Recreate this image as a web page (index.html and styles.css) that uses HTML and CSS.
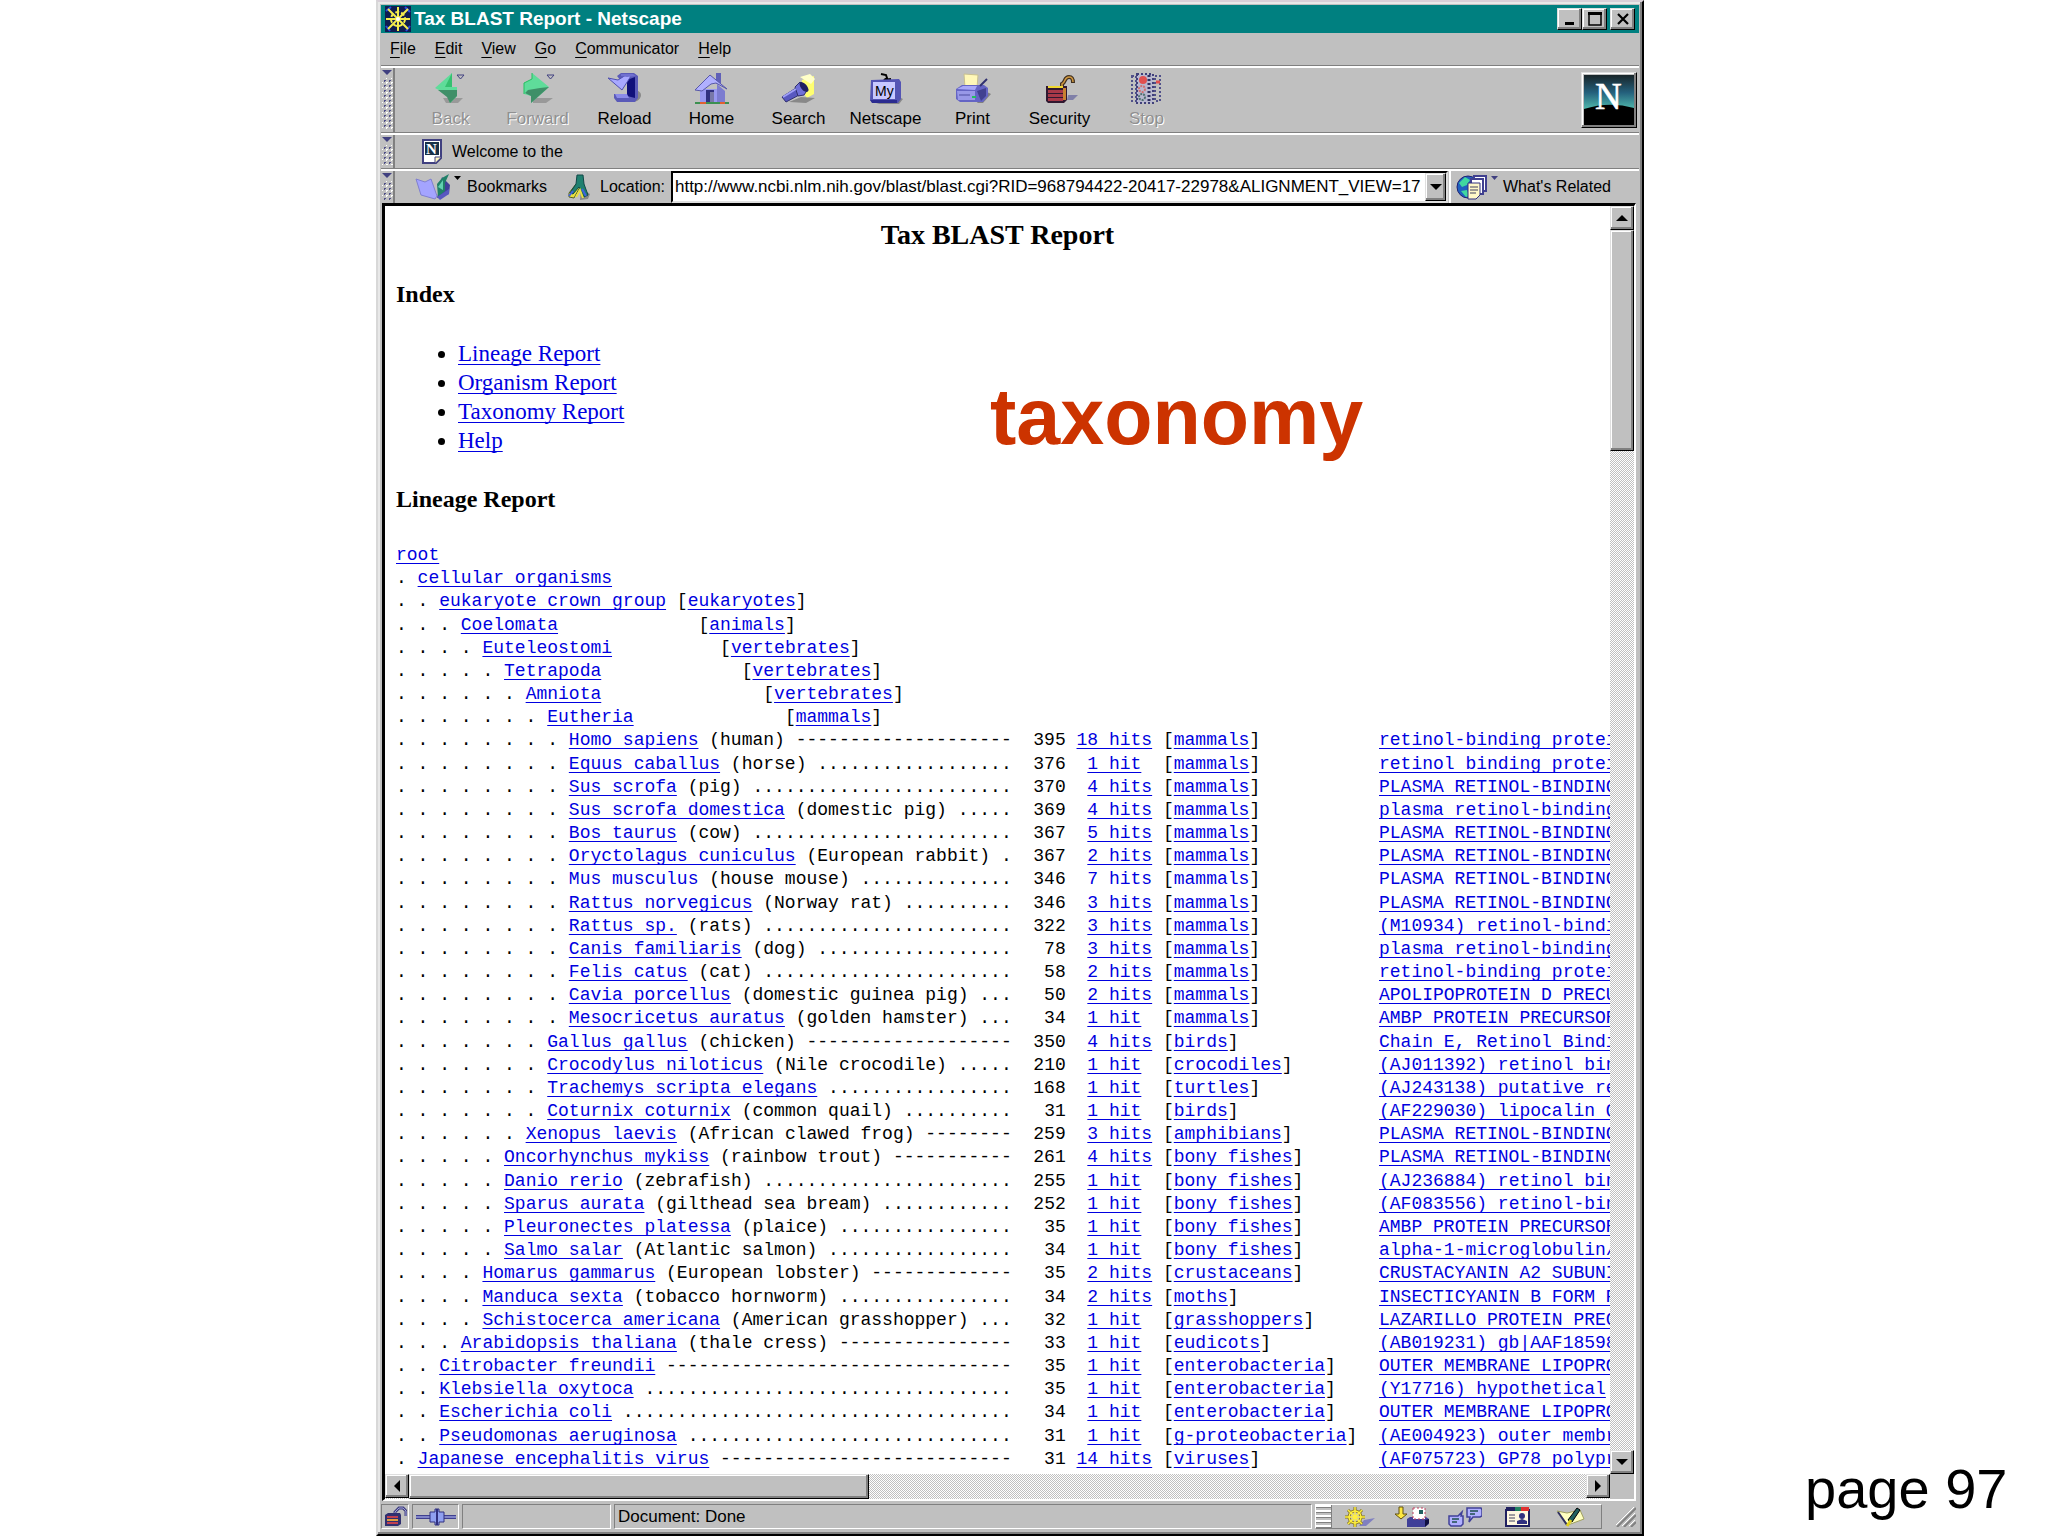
FILE: index.html
```html
<!DOCTYPE html>
<html lang="en">
<head>
  <meta charset="UTF-8">
  <title>Tax BLAST Report - Netscape</title>
  <link rel="stylesheet" href="styles.css">
</head>
<body>
  <div class="window">
    <header class="titlebar">
      <svg class="title-icon" width="26" height="26" viewBox="0 0 26 26">
        <rect width="26" height="26" fill="#101c50"/>
        <path d="M1 5l5-4M20 1l5 5M1 20l4 5M21 25l4-5" stroke="#2848e0" stroke-width="2"/>
        <path d="M13 1v24M1 13h24M3 3l20 20M23 3L3 23" stroke="#f4ec4c" stroke-width="2"/>
        <circle cx="13" cy="13" r="7" fill="none" stroke="#f4ec4c" stroke-width="2" stroke-dasharray="4 2"/>
        <circle cx="13" cy="13" r="2" fill="#fff"/>
      </svg>
      <h1>Tax BLAST Report - Netscape</h1>
      <div class="window-buttons">
        <button class="bevel" aria-label="Minimize"><svg width="16" height="14" viewBox="0 0 16 14"><path d="M3 11.500h9" stroke="#000" stroke-width="3"/></svg></button>
        <button class="bevel" aria-label="Maximize"><svg width="16" height="14" viewBox="0 0 16 14"><path d="M2 1h12v12H2z" fill="none" stroke="#000" stroke-width="1.500"/><path d="M1 1.500h14" stroke="#000" stroke-width="3"/></svg></button>
        <button class="bevel close" aria-label="Close"><svg width="16" height="14" viewBox="0 0 16 14"><path d="M3 2l10 10M13 2L3 12" stroke="#000" stroke-width="2.200"/></svg></button>
      </div>
    </header>

    <nav class="menu">
      <a href="#"><u>F</u>ile</a>
      <a href="#"><u>E</u>dit</a>
      <a href="#"><u>V</u>iew</a>
      <a href="#"><u>G</u>o</a>
      <a href="#"><u>C</u>ommunicator</a>
      <a href="#"><u>H</u>elp</a>
    </nav>

    <div class="bar toolbar">
      <div class="grip"></div>
      <div class="tools">
        <button class="tool" disabled>
          <svg width="38" height="34" viewBox="0 0 38 34">
            <path d="M11 26h20l-5 5H14z" fill="#999"/>
            <path d="M20 1v14h5v9l-7 7-2-8L3 16z" fill="#5fdc9a"/>
            <path d="M6 18h19v6l-7 7-3-6z" fill="#3f8f68"/>
            <path d="M20 1v14h-7z" fill="#35c070"/>
            <path d="M25 3h7l-3.500 4z" fill="#c0c0c0" stroke="#404080"/>
          </svg>
          Back
        </button>
        <button class="tool" disabled>
          <svg width="38" height="34" viewBox="0 0 38 34">
            <path d="M14 26h20l-7 5H14z" fill="#999"/>
            <path d="M13 1v6l-8 4v11l7 2v7l18-16z" fill="#5fdc9a"/>
            <path d="M30 15L12 31v-7l-6-3 3-3 12-2z" fill="#3f8f68"/>
            <path d="M13 1v6l-8 4v11" fill="none" stroke="#25c060"/>
            <path d="M28 3h7l-3.500 4z" fill="#c0c0c0" stroke="#404080"/>
          </svg>
          Forward
        </button>
        <button class="tool">
          <svg width="38" height="34" viewBox="0 0 38 34">
            <path d="M30 18c7 2 6 8 1 11l-4 1z" fill="#888"/>
            <path d="M11 4l4-3h13l4 3v22l-3 4H11l-3-4v-4h13V9h-6z" fill="#5a5ab8"/>
            <path d="M21 8l8-3v21l-8-2z" fill="#10107a"/>
            <path d="M2 6l10 2 8-5 5 1-9 14z" fill="#a8a8ff" stroke="#5050b0"/>
            <path d="M9 22h12l2 4H11z" fill="#8c8ce8"/>
            <path d="M15 2h12l3 2-9 1-6-1z" fill="#7070d0"/>
          </svg>
          Reload
        </button>
        <button class="tool">
          <svg width="38" height="34" viewBox="0 0 38 34">
            <path d="M2 31h34" stroke="#3c9050" stroke-width="2"/><path d="M7 31h6M27 31h5" stroke="#e06030" stroke-width="2"/>
            <path d="M23 1h5v11h-5z" fill="#6060b8"/>
            <path d="M7 17h23v13H7z" fill="#9898f0"/><path d="M24 12l8 7v11h-8z" fill="#7c7cd0"/>
            <path d="M2 18L17 3l17 14-11-6-5 1-9 7z" fill="#b0b0ff" stroke="#5858a8"/>
            <path d="M13 18h8v12h-8z" fill="#303080"/><path d="M17 20h4v10h-4z" fill="#7878a8"/>
          </svg>
          Home
        </button>
        <button class="tool">
          <svg width="38" height="34" viewBox="0 0 38 34">
            <path d="M22 8l12-4v18l-7 4-6-8z" fill="#ffff70"/><path d="M20 5l10-3 5 5-4 5z" fill="#ffffc8"/>
            <path d="M9 30l12-5 14 1-9 5z" fill="#888"/>
            <path d="M2 25l14-9 5 6-15 8z" fill="#5858c0" stroke="#303070"/>
            <path d="M15 15l5-5 8 7-4 6-6 1z" fill="#7070d8" stroke="#303070"/>
            <path d="M3 25l13-8" stroke="#a0a0f8" stroke-width="2"/>
            <ellipse cx="24" cy="15" rx="3" ry="6" transform="rotate(-40 24 15)" fill="#202060"/>
          </svg>
          Search
        </button>
        <button class="tool">
          <svg width="38" height="34" viewBox="0 0 38 34">
            <path d="M32 25l4 2-4 5H9z" fill="#888"/>
            <path d="M14 2l5 1 1 3-3 2 7-1" fill="none" stroke="#000" stroke-width="2"/>
            <path d="M4 8l28-1 2 3v17l-3 4H6l-3-3z" fill="#5454b4"/>
            <path d="M6 10h22v17H6z" fill="#c8c8ff"/><path d="M3 28h27v3H5z" fill="#2c2c90"/>
            <text x="8" y="24" font-family="Liberation Sans" font-size="14">My</text>
          </svg>
          Netscape
        </button>
        <button class="tool">
          <svg width="38" height="34" viewBox="0 0 38 34">
            <path d="M31 19l6 3-8 9h-6z" fill="#808080"/>
            <path d="M10 2l14 1-1 13H11z" fill="#fff8b8" stroke="#c8c090"/>
            <path d="M2 17l6-4h22l4 3v8l-5 6H6l-4-3z" fill="#6464c4"/>
            <path d="M3 17l6-3h14l-2 4z" fill="#a8a8f8"/>
            <path d="M3 19h18v9H4z" fill="#9898e8"/><path d="M23 19l9-3v8l-5 5z" fill="#404090"/>
            <path d="M26 14l7-7" stroke="#303070" stroke-width="2"/><path d="M18 25h4" stroke="#20c060" stroke-width="2"/>
            <path d="M5 23h11" stroke="#4c4ca0"/>
          </svg>
          Print
        </button>
        <button class="tool">
          <svg width="38" height="34" viewBox="0 0 38 34">
            <path d="M27 23h10l-5 5h-6z" fill="#8080a8"/>
            <path d="M21 17v-5c4-2 2-7 7-7 4 0 4 3 4 6" fill="none" stroke="#403020" stroke-width="4"/>
            <path d="M21 15v-3c4-2 2-7 7-7 3 0 4 2 4 5" fill="none" stroke="#d09840" stroke-width="1.500"/>
            <path d="M5 14h21v14l-3 3H7l-2-2z" fill="#301830"/>
            <path d="M7 18h15v3H7zM7 22h15v3H7zM7 26h15v3H7z" fill="#a83848"/>
            <path d="M7 15h15" stroke="#f0d830" stroke-width="2"/><path d="M22 16h3v12h-3z" fill="#c88030"/>
          </svg>
          Security
        </button>
        <button class="tool" disabled>
          <svg width="38" height="34" viewBox="0 0 38 34">
            <path d="M9 2h16v29H9z" fill="#b8b8d0" stroke="#40407a" stroke-width="2" stroke-dasharray="2 2"/>
            <path d="M4 4h4v25H4zM27 4h5v25h-5z" fill="none" stroke="#50508a" stroke-width="2" stroke-dasharray="2 2"/>
            <circle cx="15" cy="8" r="4" fill="#e05050"/><circle cx="14" cy="17" r="3" fill="none" stroke="#d07070" stroke-width="2" stroke-dasharray="2 1"/>
            <circle cx="14" cy="25" r="3" fill="none" stroke="#507070" stroke-width="2" stroke-dasharray="2 1"/>
            <path d="M21 3v27" stroke="#303060" stroke-width="3" stroke-dasharray="2 2"/><path d="M28 10h4" stroke="#e05050" stroke-width="3"/>
          </svg>
          Stop
        </button>
      </div>
      <button class="bevel throbber" aria-label="Netscape home">
        <svg width="50" height="50" viewBox="0 0 50 50">
          <defs>
            <linearGradient id="sky" x1="0" y1="0" x2="0" y2="1">
              <stop offset="0" stop-color="#182428"/><stop offset="0.350" stop-color="#24607c"/><stop offset="0.650" stop-color="#4cb0a8"/>
            </linearGradient>
          </defs>
          <rect width="50" height="50" fill="url(#sky)"/>
          <path d="M0 34Q25 26 50 33V50H0z" fill="#000"/>
          <text x="11" y="34" font-family="Liberation Serif" font-size="37" fill="#fff" stroke="#fff" stroke-width="0.500">N</text>
        </svg>
      </button>
    </div>

    <div class="bar personal">
      <div class="grip"></div>
      <a class="personal-link" href="#">
        <svg width="20" height="25" viewBox="0 0 20 25">
          <path d="M1 1h18v18l-5 5H1z" fill="#fff" stroke="#404080" stroke-width="2"/>
          <path d="M3 3h14v13H3z" fill="#183048"/>
          <text x="4" y="15" font-family="Liberation Serif" font-weight="bold" font-size="15" fill="#fff">N</text>
          <path d="M19 18h-6v6" fill="#fff8c0" stroke="#404080"/>
        </svg>
        Welcome to the
      </a>
    </div>

    <div class="bar location">
      <div class="grip"></div>
      <button class="flat bookmarks">
        <svg width="46" height="28" viewBox="0 0 46 28">
          <path d="M22 25l12-4 1-9-8-8z" fill="#404098"/>
          <path d="M1 6l9 3 6-3 6 17-2 3-14-4z" fill="#a4a4ff" stroke="#8080d0"/>
          <path d="M22 11l5-6 7-4-4 9v8l-7 6z" fill="#208068"/><path d="M23 14l5-7v10z" fill="#60d0b0"/>
          <path d="M22 24l12-8v5l-9 6z" fill="#5858c0"/>
          <path d="M39 3h7l-3.500 4z" fill="#000"/>
        </svg>
        Bookmarks
      </button>
      <svg class="link-icon" width="24" height="26" viewBox="0 0 24 26">
        <path d="M14 14l9 6-2 5-8 1z" fill="#888"/>
        <path d="M2 19l7-9 4 3-6 11-5-1z" fill="#e8e040" stroke="#506020"/>
        <path d="M10 1h6l1 9 4 11-4 2-5-10-6 7-3-1 6-9z" fill="#208070" stroke="#104848"/>
        <path d="M9 23l4-7 3 8" fill="none" stroke="#e8e040" stroke-width="2"/>
        <path d="M2 22l4-5M19 22l-4-7" stroke="#4060e0" stroke-width="2"/>
      </svg>
      <label for="url">Location:</label>
      <div class="combo">
        <input id="url" type="text" value="http://www.ncbi.nlm.nih.gov/blast/blast.cgi?RID=968794422-20417-22978&amp;ALIGNMENT_VIEW=17">
        <button class="bevel" aria-label="Show history"><svg width="12" height="6" viewBox="0 0 12 6"><path d="M0 0h12L6 6z"/></svg></button>
      </div>
      <button class="flat related">
        <svg width="42" height="26" viewBox="0 0 42 26">
          <circle cx="12" cy="13" r="11" fill="#2060c0" stroke="#202070"/>
          <path d="M3 9l6-6 5 3-3 5-5 2zM5 17l6-1 2 6-3 1z" fill="#40d8a0"/>
          <path d="M18 2h12v15H18z" fill="#fff" stroke="#404090" stroke-width="2"/>
          <path d="M15 5h12v15H15z" fill="#fff" stroke="#404090" stroke-width="2"/>
          <path d="M12 9h12v12l-4 4h-8z" fill="#fff8c8" stroke="#303080"/>
          <path d="M14 13h8M14 16h8M14 19h6" stroke="#404060"/>
          <path d="M35 2h7l-3.500 4z" fill="#404080"/>
        </svg>
        What's Related
      </button>
    </div>

    <div class="view">
      <main class="page">
        <h2>Tax BLAST Report</h2>
        <h3>Index</h3>
        <ul>
          <li><a href="#lineage">Lineage Report</a></li>
          <li><a href="#organism">Organism Report</a></li>
          <li><a href="#taxonomy">Taxonomy Report</a></li>
          <li><a href="#help">Help</a></li>
        </ul>
        <h3 id="lineage">Lineage Report</h3>
        <pre id="report"></pre>
      </main>
      <div class="scroll vertical">
        <button class="bevel" aria-label="Scroll up"><svg width="12" height="6" viewBox="0 0 12 6"><path d="M0 6h12L6 0z"/></svg></button>
        <div class="bevel thumb"></div>
        <button class="bevel end" aria-label="Scroll down"><svg width="12" height="6" viewBox="0 0 12 6"><path d="M0 0h12L6 6z"/></svg></button>
      </div>
      <div class="scroll horizontal">
        <button class="bevel" aria-label="Scroll left"><svg width="6" height="12" viewBox="0 0 6 12"><path d="M6 0v12L0 6z"/></svg></button>
        <div class="bevel thumb"></div>
        <button class="bevel end" aria-label="Scroll right"><svg width="6" height="12" viewBox="0 0 6 12"><path d="M0 0v12l6-6z"/></svg></button>
      </div>
      <p class="callout">taxonomy</p>
    </div>

    <footer class="status">
      <div class="cell lock">
        <svg width="24" height="22" viewBox="0 0 24 22">
          <path d="M12 9V6l4-4h4l3 3v5" fill="none" stroke="#404080" stroke-width="3"/>
          <path d="M12 9V6l4-4h4l3 3v5" fill="none" stroke="#a0a0d8"/>
          <path d="M2 9l3-2h12l1 2v9l-3 2H2z" fill="#303070"/>
          <path d="M4 10h11v2H4zM4 16h11v2H4z" fill="#c04050"/><path d="M4 13h11v2H4z" fill="#e0a040"/>
        </svg>
      </div>
      <div class="cell plug">
        <svg width="42" height="20" viewBox="0 0 42 20">
          <path d="M1 10h40" stroke="#404090" stroke-width="4"/><path d="M1 10h40" stroke="#c0c8ff"/>
          <path d="M15 5h5V2h4v3h5v10h-5v3h-4v-3h-5z" fill="#90a0f0" stroke="#303080"/><path d="M22 2v16" stroke="#303080" stroke-width="2"/>
        </svg>
      </div>
      <div class="cell progress"></div>
      <div class="cell message">Document: Done</div>
      <div class="components">
        <div class="lines"></div>
        <button class="flat" aria-label="Navigator">
          <svg width="34" height="22" viewBox="0 0 34 22">
            <path d="M17 20l5-6 11-2-9 8z" fill="#8080c0"/>
            <path d="M13 1v20M3 11h20M6 4l14 14M20 4L6 18" stroke="#807020" stroke-width="3"/>
            <circle cx="13" cy="11" r="6" fill="#c0c0c0" stroke="#807020" stroke-width="3"/>
            <path d="M13 1v20M3 11h20M6 4l14 14M20 4L6 18" stroke="#fff040" stroke-width="1.500"/>
            <circle cx="13" cy="11" r="6" fill="none" stroke="#fff040" stroke-width="1.500"/>
          </svg>
        </button>
        <button class="flat" aria-label="Inbox">
          <svg width="34" height="22" viewBox="0 0 34 22">
            <path d="M4 1h4v7h4l-6 5-6-5h4z" fill="#ffe840" stroke="#605010"/>
            <path d="M12 13l3-2h16l3 2v5l-4 3H12z" fill="#404098"/><path d="M30 14l4-1v4l-4 4z" fill="#101040"/>
            <path d="M18 2h12v11H18z" fill="#fff" stroke="#c04060" stroke-dasharray="2 2"/><path d="M24 4h4v4h-4z" fill="#206060"/>
          </svg>
        </button>
        <button class="flat" aria-label="Newsgroups">
          <svg width="34" height="22" viewBox="0 0 34 22">
            <path d="M1 10h9l4-4-1 4h2v8l-2 2H3l-2-2z" fill="#b0b0ff" stroke="#404098" stroke-width="1.500"/>
            <path d="M19 2h14l1 2v6l-2 1h-7l-4 5 1-5h-3z" fill="#b0b0ff" stroke="#404098" stroke-width="1.500"/>
            <path d="M4 13h7M4 16h5M22 5h8M22 8h5" stroke="#205050" stroke-width="1.500"/>
          </svg>
        </button>
        <button class="flat" aria-label="Address Book">
          <svg width="34" height="22" viewBox="0 0 34 22">
            <path d="M5 4h23v16H5z" fill="#fff8e0" stroke="#202060" stroke-width="2"/>
            <path d="M5 3h9" stroke="#202060" stroke-width="4"/><path d="M14 3h6" stroke="#208060" stroke-width="4"/><path d="M20 3h8" stroke="#e03030" stroke-width="4"/>
            <path d="M8 9h6M8 12h6M8 15h6" stroke="#404060"/><circle cx="21" cy="10" r="3" fill="#303080"/><path d="M16 18v-3l5-2 5 2v3z" fill="#303080"/>
          </svg>
        </button>
        <button class="flat" aria-label="Composer">
          <svg width="34" height="22" viewBox="0 0 34 22">
            <path d="M3 5l10 2 13-3 4 9-16 6z" fill="#ffffc0" stroke="#a0a060"/>
            <path d="M4 6l9 13" stroke="#303060" stroke-width="2"/>
            <path d="M14 14L23 2l3 2-8 12z" fill="#206060" stroke="#000"/><path d="M13 20l4-6" stroke="#e0d020" stroke-width="3"/>
          </svg>
        </button>
      </div>
      <svg class="resize" width="20" height="20" viewBox="0 0 20 20">
        <path d="M1 20L20 1M8 20L20 8M15 20l5-5" stroke="#808080" stroke-width="2"/>
        <path d="M0 18L18 0M6 19L19 6M13 19l6-6" stroke="#fff"/>
      </svg>
    </footer>
  </div>

  <p class="page-number">page 97</p>

  <script>
    // depth, name, group, column of the group
    const lineage = [
      [0, 'root'],
      [1, 'cellular organisms'],
      [2, 'eukaryote crown group', 'eukaryotes', 26],
      [3, 'Coelomata', 'animals', 28],
      [4, 'Euteleostomi', 'vertebrates', 30],
      [5, 'Tetrapoda', 'vertebrates', 32],
      [6, 'Amniota', 'vertebrates', 34],
      [7, 'Eutheria', 'mammals', 36]
    ];

    // depth, name, common name, leader, score, hits, group, best hit
    const organisms = [
      [8, 'Homo sapiens', 'human', '-', 395, 18, 'mammals', 'retinol-binding protein'],
      [8, 'Equus caballus', 'horse', '.', 376, 1, 'mammals', 'retinol binding protein'],
      [8, 'Sus scrofa', 'pig', '.', 370, 4, 'mammals', 'PLASMA RETINOL-BINDING'],
      [8, 'Sus scrofa domestica', 'domestic pig', '.', 369, 4, 'mammals', 'plasma retinol-binding'],
      [8, 'Bos taurus', 'cow', '.', 367, 5, 'mammals', 'PLASMA RETINOL-BINDING'],
      [8, 'Oryctolagus cuniculus', 'European rabbit', '.', 367, 2, 'mammals', 'PLASMA RETINOL-BINDING'],
      [8, 'Mus musculus', 'house mouse', '.', 346, 7, 'mammals', 'PLASMA RETINOL-BINDING'],
      [8, 'Rattus norvegicus', 'Norway rat', '.', 346, 3, 'mammals', 'PLASMA RETINOL-BINDING'],
      [8, 'Rattus sp.', 'rats', '.', 322, 3, 'mammals', '(M10934) retinol-binding'],
      [8, 'Canis familiaris', 'dog', '.', 78, 3, 'mammals', 'plasma retinol-binding'],
      [8, 'Felis catus', 'cat', '.', 58, 2, 'mammals', 'retinol-binding protein'],
      [8, 'Cavia porcellus', 'domestic guinea pig', '.', 50, 2, 'mammals', 'APOLIPOPROTEIN D PRECURSOR'],
      [8, 'Mesocricetus auratus', 'golden hamster', '.', 34, 1, 'mammals', 'AMBP PROTEIN PRECURSOR'],
      [7, 'Gallus gallus', 'chicken', '-', 350, 4, 'birds', 'Chain E, Retinol Binding'],
      [7, 'Crocodylus niloticus', 'Nile crocodile', '.', 210, 1, 'crocodiles', '(AJ011392) retinol binding'],
      [7, 'Trachemys scripta elegans', '', '.', 168, 1, 'turtles', '(AJ243138) putative retinol'],
      [7, 'Coturnix coturnix', 'common quail', '.', 31, 1, 'birds', '(AF229030) lipocalin Q'],
      [6, 'Xenopus laevis', 'African clawed frog', '-', 259, 3, 'amphibians', 'PLASMA RETINOL-BINDING'],
      [5, 'Oncorhynchus mykiss', 'rainbow trout', '-', 261, 4, 'bony fishes', 'PLASMA RETINOL-BINDING'],
      [5, 'Danio rerio', 'zebrafish', '.', 255, 1, 'bony fishes', '(AJ236884) retinol binding'],
      [5, 'Sparus aurata', 'gilthead sea bream', '.', 252, 1, 'bony fishes', '(AF083556) retinol-binding'],
      [5, 'Pleuronectes platessa', 'plaice', '.', 35, 1, 'bony fishes', 'AMBP PROTEIN PRECURSOR'],
      [5, 'Salmo salar', 'Atlantic salmon', '.', 34, 1, 'bony fishes', 'alpha-1-microglobulin/'],
      [4, 'Homarus gammarus', 'European lobster', '-', 35, 2, 'crustaceans', 'CRUSTACYANIN A2 SUBUNIT'],
      [4, 'Manduca sexta', 'tobacco hornworm', '.', 34, 2, 'moths', 'INSECTICYANIN B FORM PRE'],
      [4, 'Schistocerca americana', 'American grasshopper', '.', 32, 1, 'grasshoppers', 'LAZARILLO PROTEIN PRECURSOR'],
      [3, 'Arabidopsis thaliana', 'thale cress', '-', 33, 1, 'eudicots', '(AB019231) gb|AAF18598'],
      [2, 'Citrobacter freundii', '', '-', 35, 1, 'enterobacteria', 'OUTER MEMBRANE LIPOPROTEIN'],
      [2, 'Klebsiella oxytoca', '', '.', 35, 1, 'enterobacteria', '(Y17716) hypothetical'],
      [2, 'Escherichia coli', '', '.', 34, 1, 'enterobacteria', 'OUTER MEMBRANE LIPOPROTEIN'],
      [2, 'Pseudomonas aeruginosa', '', '.', 31, 1, 'g-proteobacteria', '(AE004923) outer membrane'],
      [1, 'Japanese encephalitis virus', '', '-', 31, 14, 'viruses', '(AF075723) GP78 polyprotein']
    ];

    const link = text => `<a href="#">${text}</a>`;
    const pad = n => ' '.repeat(Math.max(n, 0));
    const line = (html, cls) => `<span class="line ${cls || ''}">${html}</span>`;

    const headRows = lineage.map(([depth, name, group, col]) => {
      let html = '. '.repeat(depth) + link(name);
      if (group) html += pad(col - depth * 2 - name.length) + `[${link(group)}]`;
      return line(html);
    });

    const rows = organisms.map(([depth, name, common, leader, score, hits, group, best]) => {
      const extra = common ? ` (${common})` : '';
      const used = depth * 2 + name.length + extra.length + 1;
      const hitText = hits + (hits > 1 ? ' hits' : ' hit');
      return line(
        '. '.repeat(depth) + link(name) + extra + ' ' + leader.repeat(57 - used) +
        '  ' + String(score).padStart(3) + (hits > 9 ? ' ' : '  ') + link(hitText) +
        (hits > 1 ? ' ' : '  ') + `[${link(group)}]` + pad(18 - group.length) + link(best),
        name === 'Mus musculus' ? 'plain' : ''
      );
    });

    document.getElementById('report').innerHTML = headRows.concat(rows).join('');
  </script>
</body>
</html>
```
FILE: styles.css
```css
* {
  box-sizing: border-box;
}

body {
  margin: 0;
  min-height: 100vh;
  display: grid;
  grid-template-columns: 376px minmax(0, 1fr) 404px;
  background: #fff;
  color: #000;
  font-family: "Liberation Sans", Arial, sans-serif;
  font-size: 16px;
}

h1, h2, h3, p, ul, pre {
  margin: 0;
}

button {
  font: inherit;
  color: inherit;
  padding: 0;
  border: none;
  background: none;
}

.window {
  grid-column: 2;
  min-height: 100vh;
  display: flex;
  flex-direction: column;
  padding: 3px 3px 2px 3px;
  background: #c0c0c0;
  border: 2px solid #000;
  border-top-color: #d8d0d8;
  border-left-color: #d8d8d8;
  box-shadow: inset -2px -2px 0 #808080, inset 2px 2px 0 #e8e8e8;
}

.bevel {
  display: flex;
  align-items: center;
  justify-content: center;
  background: #c0c0c0;
  border: 1px solid #000;
  border-top-color: #dfdfdf;
  border-left-color: #dfdfdf;
  box-shadow: inset -2px -2px 0 #808080, inset 1px 1px 0 #fff;
}

/* title bar */
.titlebar {
  height: 28px;
  display: flex;
  align-items: center;
  padding: 0 4px;
  background: #008080;
  color: #fff;
}

.titlebar h1 {
  flex: 1;
  margin-left: 3px;
  font-size: 19px;
  line-height: 24px;
}

.window-buttons {
  display: flex;
}

.window-buttons .bevel {
  width: 25px;
  height: 22px;
}

.window-buttons .close {
  margin-left: 3px;
}

/* menu */
.menu {
  height: 32px;
  display: flex;
  align-items: center;
  gap: 19px;
  padding-left: 9px;
}

.menu a {
  color: #000;
  text-decoration: none;
}

.menu u {
  text-underline-offset: 3px;
}

/* tool bars */
.bar {
  display: flex;
  align-items: center;
  border-top: 1px solid #808080;
  box-shadow: inset 0 2px 0 #fff;
  padding-top: 2px;
}

.grip {
  align-self: stretch;
  width: 14px;
  padding: 2px 0 3px 1px;
  border-right: 2px solid #808080;
}

.grip::before {
  content: "";
  display: block;
  border: 5px solid transparent;
  border-top-color: #404080;
  border-bottom: 0;
  width: 0;
}

.grip::after {
  content: "";
  display: block;
  height: calc(100% - 8px);
  margin-top: 3px;
  background:
    radial-gradient(circle, #505088 1px, transparent 1px) 0 0 / 5px 5px,
    radial-gradient(circle, #fff 1px, transparent 1px) 2px 2px / 5px 5px;
}

.toolbar {
  height: 67px;
}

.tools {
  flex: 1;
  display: flex;
  padding-left: 12px;
}

.tool {
  width: 87px;
  display: flex;
  flex-direction: column;
  align-items: center;
  gap: 2px;
  padding-top: 2px;
  font-size: 17px;
  line-height: 22px;
}

.tool:disabled {
  color: #909090;
  text-shadow: 1px 1px 0 #fff;
}

.throbber {
  width: 56px;
  height: 56px;
  margin-right: 2px;
}

.personal {
  height: 36px;
}

.personal-link {
  display: flex;
  align-items: center;
  gap: 10px;
  margin-left: 27px;
  color: #000;
  text-decoration: none;
}

.location {
  height: 35px;
}

.flat {
  display: flex;
  align-items: center;
}

.bookmarks {
  margin-left: 20px;
  gap: 6px;
}

.link-icon {
  margin: 0 9px 0 20px;
}

.combo {
  flex: 1;
  align-self: stretch;
  display: flex;
  margin-left: 6px;
  background: #fff;
  border: 2px solid #000;
  border-right-color: #dfdfdf;
  border-bottom-color: #dfdfdf;
}

.combo input {
  flex: 1;
  min-width: 0;
  padding: 0 0 0 2px;
  border: none;
  outline: none;
  font: inherit;
  font-size: 17px;
}

.combo .bevel {
  width: 21px;
}

.related {
  align-self: stretch;
  margin-left: 1px;
  padding: 0 28px 0 5px;
  gap: 5px;
  border-left: 2px solid #fff;
}

/* page view */
.view {
  position: relative;
  flex: 1;
  display: grid;
  grid-template-columns: minmax(0, 1fr) 24px;
  grid-template-rows: 1fr 25px;
  margin: 0 3px 0 1px;
  border: 2px solid #fff;
  border-top: 3px solid #000;
  border-left: 3px solid #000;
}

.page {
  display: flex;
  flex-direction: column;
  padding: 11px 0 3px 11px;
  overflow: hidden;
  background: #fff;
  font-family: "Liberation Serif", "Times New Roman", serif;
  font-size: 23px;
}

.page a {
  color: #0000e0;
  text-decoration-thickness: 1px;
  text-decoration-skip-ink: none;
  text-underline-offset: 3px;
}

.page h2 {
  font-size: 28px;
  line-height: 36px;
  padding-right: 11px;
  text-align: center;
}

.page h3 {
  font-size: 24px;
  line-height: 30px;
  margin-top: 26px;
}

.page ul {
  margin: 30px 0 3px;
  padding-left: 62px;
  line-height: 29px;
}

.page pre {
  flex: 1;
  display: flex;
  flex-direction: column;
  justify-content: space-between;
  margin-top: 30px;
  font-family: "Liberation Mono", "Courier New", monospace;
  font-size: 18px;
  line-height: 23px;
}

.page .plain a {
  text-decoration: none;
}

.callout {
  position: absolute;
  top: 166px;
  left: 605px;
  color: #cc3300;
  font-size: 79px;
  font-weight: bold;
  line-height: 90px;
}

/* scroll bars */
.scroll {
  display: flex;
  background: repeating-conic-gradient(#c0c0c0 0 25%, #fff 0 50%) 0 0 / 2px 2px;
}

.scroll button {
  width: 24px;
  height: 24px;
}

.vertical {
  flex-direction: column;
}

.vertical .thumb {
  height: 221px;
}

.vertical .end {
  margin-top: auto;
}

.horizontal .thumb {
  width: 460px;
}

.horizontal .end {
  margin-left: auto;
}

.view::after {
  content: "";
  background: #c0c0c0;
}

/* status bar */
.status {
  height: 31px;
  display: flex;
  align-items: center;
  gap: 3px;
}

.cell {
  height: 25px;
  display: flex;
  align-items: center;
  justify-content: center;
  border: 1px solid #808080;
  border-right-color: #fff;
  border-bottom-color: #fff;
}

.lock {
  width: 28px;
}

.plug {
  width: 47px;
}

.progress {
  width: 149px;
}

.message {
  flex: 1;
  justify-content: flex-start;
  padding-left: 3px;
  font-size: 17px;
}

.components {
  height: 25px;
  display: flex;
  align-items: center;
  gap: 6px;
  padding-right: 13px;
  border: 1px solid #808080;
  border-top-color: #fff;
  border-left-color: #fff;
}

.components .flat {
  width: 34px;
  margin-left: 4px;
}

.components .flat + .flat {
  margin-left: 13px;
}

.lines {
  align-self: stretch;
  width: 16px;
  border-right: 1px solid #808080;
  background: repeating-linear-gradient(#fff 0 2px, #808080 2px 3px, #c0c0c0 3px 5px);
}

.resize {
  margin: 0 3px 0 11px;
}

.page-number {
  align-self: end;
  padding: 0 0 15px 161px;
  font-size: 56px;
  line-height: 64px;
  white-space: nowrap;
}
```
